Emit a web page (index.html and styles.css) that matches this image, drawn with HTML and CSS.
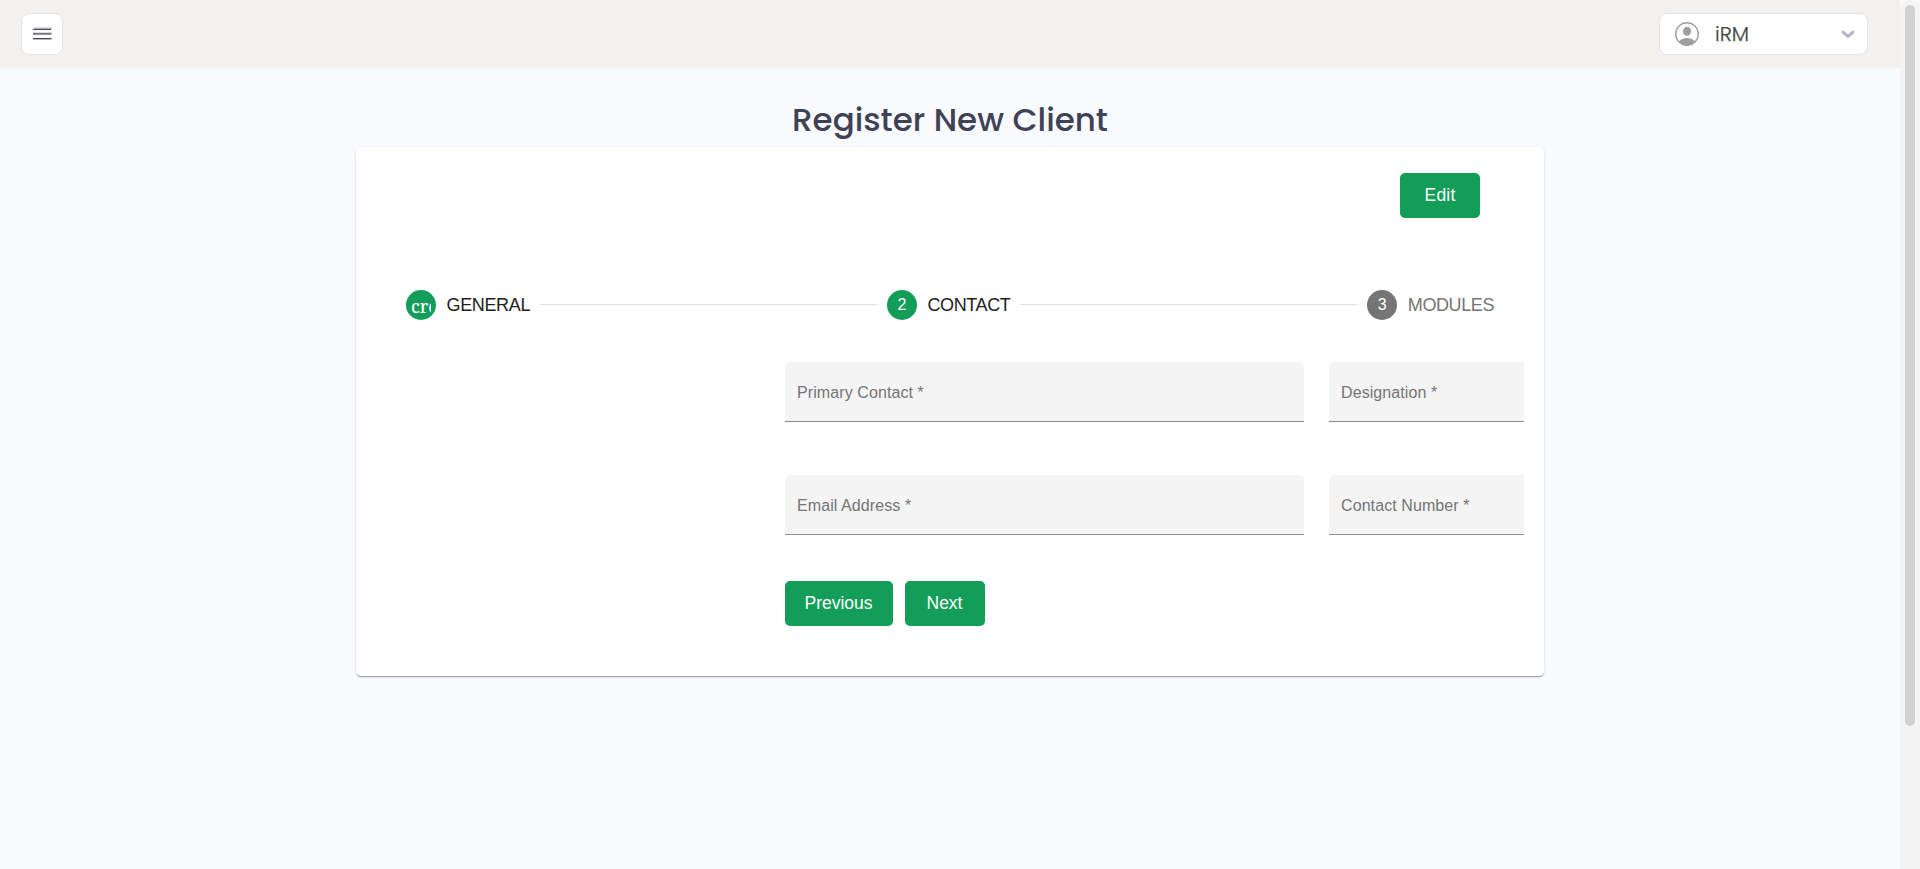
FILE: index.html
```html
<!DOCTYPE html>
<html lang="en">
<head>
<meta charset="utf-8">
<title>Register New Client</title>
<link rel="stylesheet" href="styles.css">
</head>
<body>
<div class="shell">
  <div class="page">
    <header class="topbar">
      <button class="menu" aria-label="Menu">
        <svg width="20" height="14" viewBox="0 0 20 14"><path class="bar-soft" d="M1 1.5H19M0 6.5H19M0 12H19"/><path class="bar" d="M0 2.5H18M0 7H18M0 11.5H18"/></svg>
      </button>
      <div class="account">
        <svg width="24" height="24" viewBox="0 0 24 24"><circle cx="12" cy="12" r="11.3" fill="none" stroke="#a0a0a0" stroke-width="1.5"/><ellipse cx="12" cy="9.3" rx="4.1" ry="4.5" fill="#a0a0a0"/><path d="M4 19.5C6 17.1 8.8 16 12 16s6 1.1 8 3.5c-2 2.5-4.8 3.9-8 3.9s-6-1.4-8-3.9Z" fill="#a0a0a0"/></svg>
        <span class="account-name">iRM</span>
        <svg class="chevron" width="14" height="9" viewBox="0 0 14 9"><path d="M2 2.2 7 6.3l5-4.1"/></svg>
      </div>
    </header>
    <main class="content">
      <h1 class="title">Register New Client</h1>
      <section class="card">
        <div class="actions"><button class="btn edit">Edit</button></div>
        <div class="stepper">
          <div class="step"><span class="dot"><span class="ligature">create</span></span><span class="general">GENERAL</span></div>
          <div class="line"></div>
          <div class="step"><span class="dot">2</span><span class="contact">CONTACT</span></div>
          <div class="line"></div>
          <div class="step idle"><span class="dot">3</span><span>MODULES</span></div>
        </div>
        <div class="form">
          <div class="field">Primary Contact *</div>
          <div class="field cut">Designation *</div>
          <div class="field">Email Address *</div>
          <div class="field cut">Contact Number *</div>
        </div>
        <div class="nav"><button class="btn prev">Previous</button><button class="btn next">Next</button></div>
      </section>
    </main>
  </div>
  <div class="track"><div class="thumb"></div></div>
</div>
</body>
</html>
```

FILE: styles.css
```css
* { box-sizing: border-box; }
body {
  margin: 0;
  height: 869px;
  overflow: hidden;
  background: #f9fafe;
  font-family: "Liberation Sans", Arial, sans-serif;
}
.shell { display: flex; height: 869px; }
.page { width: 1900px; }
.topbar {
  height: 68px;
  padding: 13px 32px 13px 21px;
  display: flex;
  justify-content: space-between;
  background: #f2f1f0;
}
.menu, .account {
  height: 42px;
  background: #fff;
  border: 1px solid #e5e5e5;
  border-radius: 8px;
}
.menu {
  width: 42px;
  padding: 0 0 0 11px;
  display: flex;
  align-items: center;
}
.bar, .bar-soft { fill: none; stroke: #464457; stroke-width: 1.2; }
.bar-soft { stroke: #b6b5c3; stroke-width: 2; }
.account {
  width: 209px;
  padding: 0 12px 0 15px;
  display: flex;
  align-items: center;
}
.account-name {
  margin-left: 16px;
  font: 300 20.5px/40px Poppins, Inter, sans-serif;
  -webkit-text-stroke: .25px #464646;
  color: #464646;
}
.chevron { margin-left: auto; }
.chevron path {
  fill: none;
  stroke: #b5b5c3;
  stroke-width: 3;
  stroke-linecap: round;
  stroke-linejoin: round;
}
.content { padding: 29px 356px 0; }
.title {
  margin: 0;
  height: 50px;
  text-align: center;
  font: 500 32.5px/46px Poppins, Inter, sans-serif;
  white-space: nowrap;
  color: #3f4254;
}
.card {
  height: 529px;
  padding: 26px 20px 0 50px;
  background: #fff;
  border-radius: 5px;
  box-shadow: 0 2px 1px -1px rgba(0,0,0,.2), 0 1px 1px rgba(0,0,0,.14), 0 1px 3px rgba(0,0,0,.12);
}
.actions { display: flex; justify-content: flex-end; padding-right: 44px; }
.btn {
  height: 45px;
  padding: 0 0 1px;
  border: 0;
  border-radius: 5px;
  background: #129e58;
  color: #fff;
  font: 17.5px/44px "Liberation Sans", Arial, sans-serif;
}
.edit { letter-spacing: .2px; }
.edit, .next { width: 80px; }
.prev { width: 108px; }
.stepper {
  display: flex;
  align-items: center;
  height: 30px;
  margin-top: 72px;
  padding-right: 30px;
}
.step {
  display: flex;
  align-items: center;
  gap: 10.5px;
  font-size: 18px;
  line-height: 30px;
  letter-spacing: -.4px;
  color: #212121;
  white-space: nowrap;
}
.general { letter-spacing: -.35px; }
.idle { color: #757575; }
.dot {
  width: 30px;
  height: 30px;
  border-radius: 50%;
  display: flex;
  justify-content: center;
  background: #129e58;
  color: #fff;
  font-size: 16px;
  letter-spacing: 0;
}
.idle .dot { background: #757575; }
.ligature {
  width: 20px;
  overflow: hidden;
  font: 500 17.6px/33px "Noto Serif", "DejaVu Serif", serif;
}
.line { flex: 1; height: 1px; margin: 0 10px 1px; background: #e0e0e0; }
.form {
  display: grid;
  grid-template-columns: 519px 195px;
  column-gap: 25px;
  row-gap: 53px;
  margin: 42px 0 0 379px;
}
.field {
  height: 60px;
  padding-left: 12px;
  border-bottom: 1px solid #8c8c8c;
  border-radius: 5px 5px 0 0;
  background: #f4f4f4;
  color: #757575;
  font-size: 16px;
  letter-spacing: .09px;
  line-height: 62px;
  white-space: nowrap;
}
.cut { border-radius: 5px 0 0 0; }
.nav { display: flex; gap: 12px; margin: 46px 0 0 378.5px; }
.track {
  width: 20px;
  padding: 5px;
  background: #f4f4f4;
  border-radius: 10px 10px 0 0;
}
.thumb { height: 721px; border-radius: 5px; background: #d1d1d1; }
```
